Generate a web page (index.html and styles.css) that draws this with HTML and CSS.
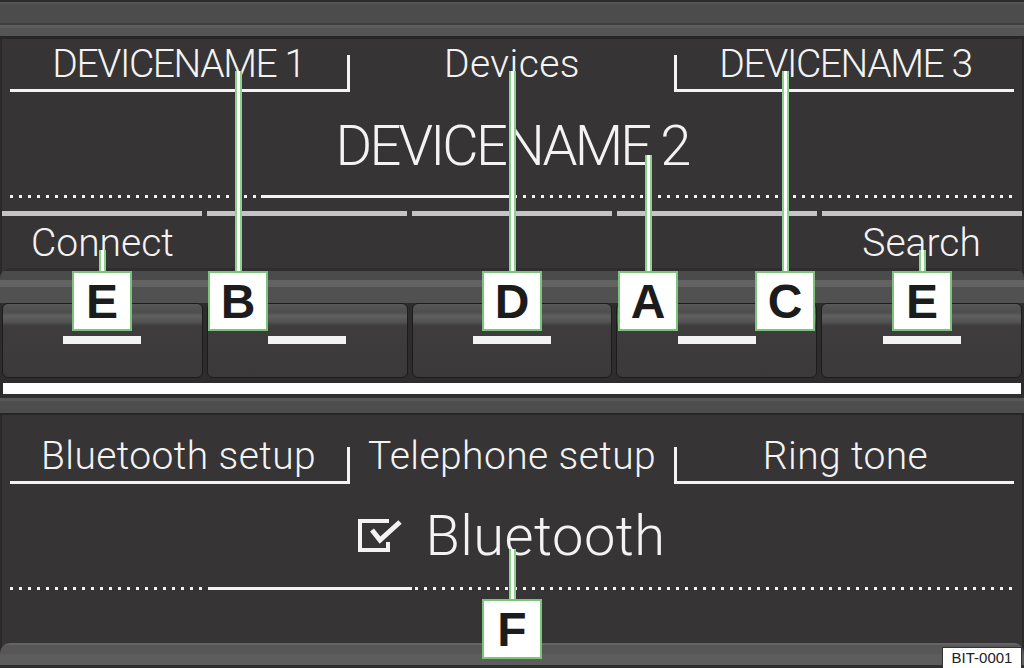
FILE: index.html
```html
<!DOCTYPE html>
<html lang="en">
<head>
    <meta charset="UTF-8">
    <meta name="viewport" content="width=device-width, initial-scale=1.0">
    <title>Phone - Devices</title>
    <link rel="stylesheet" href="styles.css">
</head>
<body>
  <div class="figure">

    <section class="screen screen-top">
      <div class="bezel"></div>
      <nav class="tabs">
        <div class="tab tab-left caps">DEVICENAME 1</div>
        <div class="tab">Devices</div>
        <div class="tab tab-right caps">DEVICENAME 3</div>
      </nav>
      <h1 class="title caps-big">DEVICENAME 2</h1>
      <div class="slider slider-4"><span class="thumb"></span></div>
      <div class="segments">
        <span></span><span></span><span></span><span></span><span></span>
      </div>
      <div class="softlabels">
        <span>Connect</span><span></span><span></span><span></span><span>Search</span>
      </div>
      <div class="bevel"></div>
      <div class="keys">
        <div class="key"><span class="key-bar"></span></div>
        <div class="key"><span class="key-bar"></span></div>
        <div class="key"><span class="key-bar"></span></div>
        <div class="key"><span class="key-bar"></span></div>
        <div class="key"><span class="key-bar"></span></div>
      </div>
    </section>

    <div class="divider"></div>

    <section class="screen screen-bottom">
      <div class="bezel bezel-thin"></div>
      <nav class="tabs tabs-low">
        <div class="tab tab-left">Bluetooth setup</div>
        <div class="tab">Telephone setup</div>
        <div class="tab tab-right">Ring tone</div>
      </nav>
      <div class="title title-check">
        <svg class="checkbox" width="44" height="34" viewBox="0 0 44 34">
          <polyline points="31,2 2,2 2,31 30,31 30,23" fill="none" stroke="#f3f3f3" stroke-width="4"/>
          <polyline points="14,11 22,21 42,3" fill="none" stroke="#f3f3f3" stroke-width="5"/>
        </svg>
        <span>Bluetooth</span>
      </div>
      <div class="slider slider-5"><span class="thumb"></span></div>
      <div class="footer-bezel"></div>
    </section>

    <!-- callouts -->
    <div class="callout callout-e1"><span class="callout-line"></span><span class="tag">E</span></div>
    <div class="callout callout-b"><span class="callout-line"></span><span class="tag">B</span></div>
    <div class="callout callout-d"><span class="callout-line"></span><span class="tag">D</span></div>
    <div class="callout callout-a"><span class="callout-line"></span><span class="tag">A</span></div>
    <div class="callout callout-c"><span class="callout-line"></span><span class="tag">C</span></div>
    <div class="callout callout-e2"><span class="callout-line"></span><span class="tag">E</span></div>
    <div class="callout callout-f"><span class="callout-line"></span><span class="tag">F</span></div>

    <div class="code">BIT-0001</div>
  </div>
</body>
</html>
```

FILE: styles.css
```css
body {
    margin: 0;
    background-color: #2c2b2b;
    font-family: Roboto, "Liberation Sans", sans-serif;
    font-weight: 300;
    color: #f3f3f3;
}

.figure {
    position: relative;
    width: 1024px;
    height: 668px;
    overflow: hidden;
    background-color: #2c2b2b;
}

.screen {
    background-color: #363435;
    box-shadow: inset 2px 0 #2a2829, inset -2px 0 #2a2829;
}

.bezel {
    height: 39px;
    background: linear-gradient(to bottom,
        #2b2b2b 0 2px,
        #555555 2px 4px,
        #4c4c4c 4px 23px,
        #3e3e3e 23px 25px,
        #5e5e5e 25px 28px,
        #555555 28px 36px,
        #262626 36px 39px);
}

.bezel-thin {
    height: 21px;
    background: linear-gradient(to bottom,
        #2f2f2f 0 4px,
        #585858 4px 7px,
        #4d4d4d 7px 19px,
        #262626 19px 21px);
}

.tabs {
    display: grid;
    grid-template-columns: 340px 1fr 340px;
    padding: 16px 10px 0;
}

.tabs-low {
    padding-top: 32px;
}

.tab {
    height: 34px;
    font-size: 39px;
    line-height: 19px;
    text-align: center;
    letter-spacing: 0.4px;
    white-space: nowrap;
}

.tab-left {
    border-bottom: 3px solid #f3f3f3;
    border-right: 3px solid #f3f3f3;
}

.tab-right {
    border-bottom: 3px solid #f3f3f3;
    border-left: 3px solid #f3f3f3;
}

.caps {
    letter-spacing: -1.4px;
}

.title {
    margin: 0;
    height: 77px;
    padding-top: 26px;
    font-size: 56px;
    font-weight: 300;
    line-height: 56px;
    text-align: center;
    letter-spacing: 0.5px;
}

.caps-big {
    letter-spacing: -2.8px;
}

.title-check {
    height: 56px;
    padding-top: 24px;
    padding-bottom: 23px;
    display: flex;
    justify-content: center;
    align-items: center;
    gap: 23px;
}

.checkbox {
    display: block;
}

.slider {
    height: 3px;
    margin: 0 10px;
    display: grid;
    background: repeating-linear-gradient(to right, #f3f3f3 0 3px, transparent 3px 9px);
}

.slider-4 {
    grid-template-columns: repeat(4, 1fr);
}

.slider-5 {
    grid-template-columns: repeat(5, 1fr);
}

.thumb {
    grid-column: 2;
    background-color: #f3f3f3;
}

.segments {
    display: grid;
    grid-template-columns: repeat(5, 1fr);
    gap: 5px;
    padding: 0 2px;
    margin-top: 13px;
}

.segments span {
    height: 5px;
    background-color: #c4c4c4;
}

.softlabels {
    display: grid;
    grid-template-columns: repeat(5, 1fr);
    gap: 4px;
    height: 44px;
    padding: 8px 2px 0;
    font-size: 39px;
    line-height: 39px;
    text-align: center;
}

.bevel {
    height: 35px;
    border-radius: 10px 10px 0 0;
    background: linear-gradient(to bottom,
        #2e2e2e 0 3px,
        #4b4b4b 3px 12px,
        #636363 12px 19px,
        #515151 19px 35px);
}

.keys {
    display: grid;
    grid-template-columns: repeat(5, 1fr);
    gap: 4px;
    height: 75px;
    padding: 0 2px 5px;
    background-color: #2e2c2d;
}

.key {
    display: flex;
    justify-content: center;
    align-items: flex-start;
    padding-top: 32px;
    border: 1px solid #1c1c1c;
    border-radius: 6px;
    background: linear-gradient(to bottom,
        #585858 0,
        #4d4d4d 8px,
        #5f5f5f 12px,
        #525252 18px,
        #3e3c3d 22px,
        #3b393a 100%);
}

.key-bar {
    width: 78px;
    height: 8px;
    background-color: #f3f3f3;
}

.divider {
    height: 11px;
    margin: 0 3px;
    background-color: #ffffff;
}

.footer-bezel {
    height: 25px;
    margin-top: 53px;
    border-radius: 10px 10px 0 0;
    background: linear-gradient(to bottom,
        #646464 0 2px,
        #575757 2px 11px,
        #5d5d5d 11px 22px,
        #2e2e2e 22px 25px);
}

/* callouts */
.callout {
    position: absolute;
    width: 60px;
    display: flex;
    flex-direction: column;
    align-items: center;
}

.callout-line {
    flex: 1;
    width: 3px;
    background-color: #ffffff;
    border-left: 2px solid #8fd08f;
    border-right: 2px solid #8fd08f;
}

.tag {
    width: 60px;
    height: 60px;
    box-sizing: border-box;
    border: 2px solid #7cc47c;
    background-color: #ffffff;
    color: #1c1c1c;
    font: bold 48px/58px "Liberation Sans", Arial, sans-serif;
    text-align: center;
}

.callout-e1 { left: 72px;  top: 250px; height: 81px; }
.callout-b  { left: 208px; top: 71px;  height: 260px; }
.callout-d  { left: 482px; top: 71px;  height: 260px; }
.callout-a  { left: 618px; top: 155px; height: 176px; }
.callout-c  { left: 755px; top: 71px;  height: 260px; }
.callout-e2 { left: 892px; top: 250px; height: 81px; }
.callout-f  { left: 482px; top: 549px; height: 110px; }

.code {
    position: absolute;
    right: 2px;
    bottom: 0;
    width: 78px;
    height: 20px;
    border: 1px solid #333333;
    border-bottom: none;
    background-color: #ffffff;
    color: #222222;
    font: 15px/20px "Liberation Sans", Arial, sans-serif;
    text-align: center;
}
```
